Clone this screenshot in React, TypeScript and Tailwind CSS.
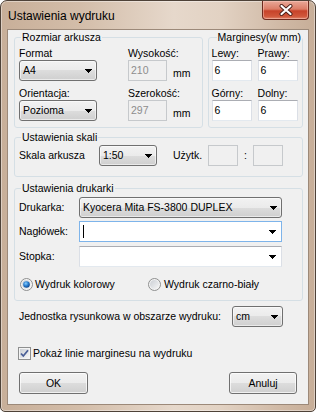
import React from "react";

function Arrow() {
  return (
    <svg width="7" height="4" viewBox="0 0 7 4" className="shrink-0">
      <path d="M0 0h7v1H0zM1 1h5v1H1zM2 2h3v1H2zM3 3h1v1H3z" fill="#000" />
    </svg>
  );
}

function DropList({ className, text }: { className: string; text: string }) {
  return (
    <div
      className={`flex items-center justify-between h-[21px] rounded-[3px] border border-[#707070] bg-[linear-gradient(to_bottom,#f2f2f2_0%,#ebebeb_50%,#dddddd_50%,#cfcfcf_100%)] shadow-[inset_0_0_0_1px_rgba(255,255,255,0.55)] pl-[3px] pr-[4px] ${className}`}
    >
      <span className="whitespace-nowrap">{text}</span>
      <Arrow />
    </div>
  );
}

function EditCombo({ className, focused }: { className: string; focused?: boolean }) {
  return (
    <div
      className={`flex items-center justify-between h-[21px] bg-white border pl-[3px] pr-[5px] ${
        focused ? "border-[#7eb4ea]" : "border-t-[#abadb3] border-x-[#dbdfe6] border-b-[#e3e9ef]"
      } ${className}`}
    >
      {focused ? <span className="w-[1px] h-[13px] bg-black" /> : <span />}
      <Arrow />
    </div>
  );
}

function TextBox({ className, text, disabled }: { className: string; text?: string; disabled?: boolean }) {
  return (
    <div
      className={`flex items-center h-[21px] border pl-[2px] ${
        disabled
          ? "bg-[#f0f0f0] text-[#8d8d8d] border-[#c6c9cc]"
          : "bg-white border-t-[#abadb3] border-x-[#dbdfe6] border-b-[#e3e9ef]"
      } ${className}`}
    >
      {text}
    </div>
  );
}

function Radio({ checked }: { checked?: boolean }) {
  return (
    <svg width="13" height="13" viewBox="0 0 13 13" className="shrink-0">
      <defs>
        <linearGradient id={checked ? "rg1" : "rg2"} x1="0" y1="0" x2="1" y2="1">
          <stop offset="0" stopColor="#cbcfd5" />
          <stop offset="1" stopColor="#f6f6f6" />
        </linearGradient>
        <radialGradient id="dot" cx="0.4" cy="0.35" r="0.7">
          <stop offset="0" stopColor="#8ad0ff" />
          <stop offset="0.5" stopColor="#2b7fd0" />
          <stop offset="1" stopColor="#0a3f86" />
        </radialGradient>
      </defs>
      <circle cx="6.5" cy="6.5" r="6" fill="#f4f4f4" stroke="#8e8f8f" />
      <circle cx="6.5" cy="6.5" r="4.5" fill={`url(#${checked ? "rg1" : "rg2"})`} />
      {checked && <circle cx="6.5" cy="6.5" r="3.3" fill="url(#dot)" />}
    </svg>
  );
}

function CheckBox() {
  return (
    <svg width="13" height="13" viewBox="0 0 13 13" className="shrink-0">
      <defs>
        <linearGradient id="cbg" x1="0" y1="0" x2="1" y2="1">
          <stop offset="0" stopColor="#cbcfd5" />
          <stop offset="1" stopColor="#f6f6f6" />
        </linearGradient>
      </defs>
      <rect x="0.5" y="0.5" width="12" height="12" fill="#f4f4f4" stroke="#8e8f8f" />
      <rect x="2" y="2" width="9" height="9" fill="url(#cbg)" />
      <path d="M3 6.5 L5.3 9 L10 3.3" fill="none" stroke="#4a5f97" strokeWidth="1.8" />
    </svg>
  );
}

function Button({ className, text }: { className: string; text: string }) {
  return (
    <div
      className={`flex items-center justify-center h-[22px] rounded-[3px] border border-[#707070] bg-[linear-gradient(to_bottom,#f2f2f2_0%,#ebebeb_50%,#dddddd_50%,#cfcfcf_100%)] shadow-[inset_0_0_0_1px_rgba(255,255,255,0.7)] ${className}`}
    >
      {text}
    </div>
  );
}

function CloseButton() {
  return (
    <div className="mr-[6px] w-[47px] h-[19px] rounded-b-[4px] border border-t-0 border-[#6e2a1e] bg-[linear-gradient(to_bottom,#e9a898_0%,#dc7d67_45%,#c7432a_55%,#d0573b_85%,#e0866c_100%)] shadow-[inset_0_0_0_1px_rgba(255,210,200,0.45)] flex items-center justify-center">
      <svg width="14" height="12" viewBox="0 0 14 12">
        <path d="M2.5 2 L11.5 10 M11.5 2 L2.5 10" stroke="#4a1f18" strokeWidth="4" strokeLinecap="round" />
        <path d="M2.5 2 L11.5 10 M11.5 2 L2.5 10" stroke="#ffffff" strokeWidth="2.2" strokeLinecap="round" />
      </svg>
    </div>
  );
}

export default function App() {
  return (
    <div className="w-[316px] h-[412px] font-['Liberation_Sans',Arial,sans-serif] text-[10.5px] leading-[13px] text-black">
      <div className="w-full h-full flex flex-col rounded-t-[7px] rounded-b-[5px] border border-[#4e4238] bg-[linear-gradient(to_right,#c8af99_0%,#d3bda9_25%,#e6d8cb_55%,#e2d2c3_70%,#cfb8a4_90%,#c7ae98_100%)] shadow-[inset_0_0_0_1px_rgba(255,255,255,0.4)] overflow-hidden">
        {/* Title bar */}
        <div className="h-[28px] shrink-0 flex items-start justify-between">
          <span className="pl-[7px] pt-[8px] text-[12px] leading-[15px] whitespace-nowrap">Ustawienia wydruku</span>
          <CloseButton />
        </div>
        {/* Client area */}
        <div className="mx-[6px] mb-[6px] flex-1 flex flex-col border border-[#9c8979] bg-[#f0f0f0]">
          <div className="pl-[6px] pr-[5px] pt-[1px] flex flex-col">
            {/* Top row */}
            <div className="flex gap-[5px]">
              <fieldset className="w-[189px] rounded-[3px] border border-[#d5dfe5] pl-[4px] pt-[3px] pb-[6px]">
                <legend className="ml-[2px] px-[1px]">Rozmiar arkusza</legend>
                <div className="flex">
                  <div className="w-[109px] flex flex-col">
                    <span>Format</span>
                    <DropList className="w-[78px]" text="A4" />
                    <span className="mt-[6px]">Orientacja:</span>
                    <DropList className="w-[78px]" text="Pozioma" />
                  </div>
                  <div className="flex flex-col">
                    <span>Wysokość:</span>
                    <div className="flex items-end">
                      <TextBox className="w-[39px]" text="210" disabled />
                      <span className="ml-[6px] mb-[1px]">mm</span>
                    </div>
                    <span className="mt-[6px]">Szerokość:</span>
                    <div className="flex items-end">
                      <TextBox className="w-[39px]" text="297" disabled />
                      <span className="ml-[6px] mb-[1px]">mm</span>
                    </div>
                  </div>
                </div>
              </fieldset>
              <fieldset className="w-[95px] rounded-[3px] border border-[#d5dfe5] pl-[3px] pt-[3px] pb-[6px]">
                <legend className="ml-[5px] px-[1px] whitespace-nowrap">Marginesy(w mm)</legend>
                <div className="grid grid-cols-[40px_40px] gap-x-[6px]">
                  <span>Lewy:</span>
                  <span>Prawy:</span>
                  <TextBox className="w-[40px]" text="6" />
                  <TextBox className="w-[40px]" text="6" />
                  <span className="mt-[6px]">Górny:</span>
                  <span className="mt-[6px]">Dolny:</span>
                  <TextBox className="w-[40px]" text="6" />
                  <TextBox className="w-[40px]" text="6" />
                </div>
              </fieldset>
            </div>
            {/* Scale */}
            <fieldset className="mt-[3px] rounded-[3px] border border-[#d5dfe5] pl-[4px] pt-[1px] pb-[10px]">
              <legend className="ml-[2px] px-[1px]">Ustawienia skali</legend>
              <div className="flex items-center">
                <span className="w-[80px]">Skala arkusza</span>
                <DropList className="w-[58px]" text="1:50" />
                <span className="ml-[16px] w-[35px]">Użytk.</span>
                <TextBox className="w-[30px]" disabled />
                <span className="w-[15px] text-center">:</span>
                <TextBox className="w-[30px]" disabled />
              </div>
            </fieldset>
            {/* Printer */}
            <fieldset className="mt-[5px] rounded-[3px] border border-[#d5dfe5] pl-[4px] pt-[2px] pb-[9px]">
              <legend className="ml-[2px] px-[1px]">Ustawienia drukarki</legend>
              <div className="flex items-center">
                <span className="w-[60px]">Drukarka:</span>
                <DropList className="w-[203px]" text="Kyocera Mita FS-3800 DUPLEX" />
              </div>
              <div className="flex items-center mt-[3px]">
                <span className="w-[60px]">Nagłówek:</span>
                <EditCombo className="w-[203px]" focused />
              </div>
              <div className="flex items-center mt-[4px]">
                <span className="w-[60px]">Stopka:</span>
                <EditCombo className="w-[203px]" />
              </div>
              <div className="flex items-center mt-[11px] h-[13px]">
                <div className="w-[129px] flex items-center pl-[1px]">
                  <Radio checked />
                  <span className="ml-[2px]">Wydruk kolorowy</span>
                </div>
                <Radio />
                <span className="ml-[3px]">Wydruk czarno-biały</span>
              </div>
            </fieldset>
          </div>
          {/* Unit */}
          <div className="mt-[5px] pl-[11px] flex items-center">
            <span className="w-[213px]">Jednostka rysunkowa w obszarze wydruku:</span>
            <DropList className="w-[51px]" text="cm" />
          </div>
          {/* Checkbox */}
          <div className="mt-[20px] pl-[10px] flex items-center h-[13px]">
            <CheckBox />
            <span className="ml-[2px]">Pokaż linie marginesu na wydruku</span>
          </div>
          {/* Buttons */}
          <div className="mt-[12px] pl-[11px] pr-[11px] flex justify-between">
            <Button className="w-[69px]" text="OK" />
            <Button className="w-[68px]" text="Anuluj" />
          </div>
        </div>
      </div>
    </div>
  );
}
